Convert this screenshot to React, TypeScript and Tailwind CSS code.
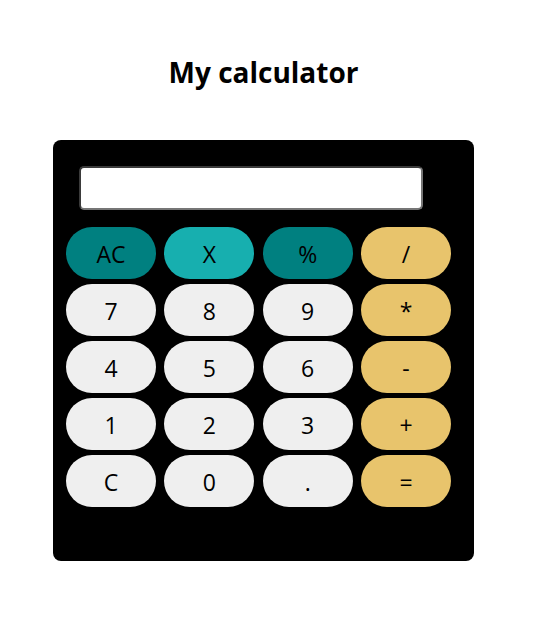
import React from "react";

type Key = {
  label: string;
  color: string;
};

const keys: Key[] = [
  { label: "AC", color: "bg-[#008080]" },
  { label: "X", color: "bg-[#17afaf]" },
  { label: "%", color: "bg-[#008080]" },
  { label: "/", color: "bg-[#e8c46c]" },
  { label: "7", color: "bg-[#efefef]" },
  { label: "8", color: "bg-[#efefef]" },
  { label: "9", color: "bg-[#efefef]" },
  { label: "*", color: "bg-[#e8c46c]" },
  { label: "4", color: "bg-[#efefef]" },
  { label: "5", color: "bg-[#efefef]" },
  { label: "6", color: "bg-[#efefef]" },
  { label: "-", color: "bg-[#e8c46c]" },
  { label: "1", color: "bg-[#efefef]" },
  { label: "2", color: "bg-[#efefef]" },
  { label: "3", color: "bg-[#efefef]" },
  { label: "+", color: "bg-[#e8c46c]" },
  { label: "C", color: "bg-[#efefef]" },
  { label: "0", color: "bg-[#efefef]" },
  { label: ".", color: "bg-[#efefef]" },
  { label: "=", color: "bg-[#e8c46c]" },
];

const App: React.FC = () => {
  return (
    <div
      className="min-h-screen bg-white text-black"
      style={{ fontFamily: '"Open Sans", "Noto Sans", sans-serif' }}
    >
      <div className="ml-[53px] w-[421px] pt-[54px]">
        <h1 className="text-center text-[28px] font-bold leading-[36px]">
          My calculator
        </h1>
        <div className="mt-[50px] h-[421px] rounded-lg bg-black pt-[26px]">
          <input
            type="text"
            className="ml-[26px] block h-[44px] w-[344px] rounded-[5px] border-2 border-b-[#767676] border-l-[#3b3b3b] border-r-[#767676] border-t-[#3b3b3b] bg-white px-2 text-2xl outline-none"
          />
          <div className="ml-[13px] mt-[17px] grid grid-cols-[repeat(4,90px)] gap-x-[8.33px] gap-y-[5px]">
            {keys.map((k, index) => (
              <button
                key={index}
                className={`${k.color} flex h-[52px] items-center justify-center rounded-[26px] pt-[3px] text-[23px] text-black`}
              >
                {k.label}
              </button>
            ))}
          </div>
        </div>
      </div>
    </div>
  );
};

export default App;
